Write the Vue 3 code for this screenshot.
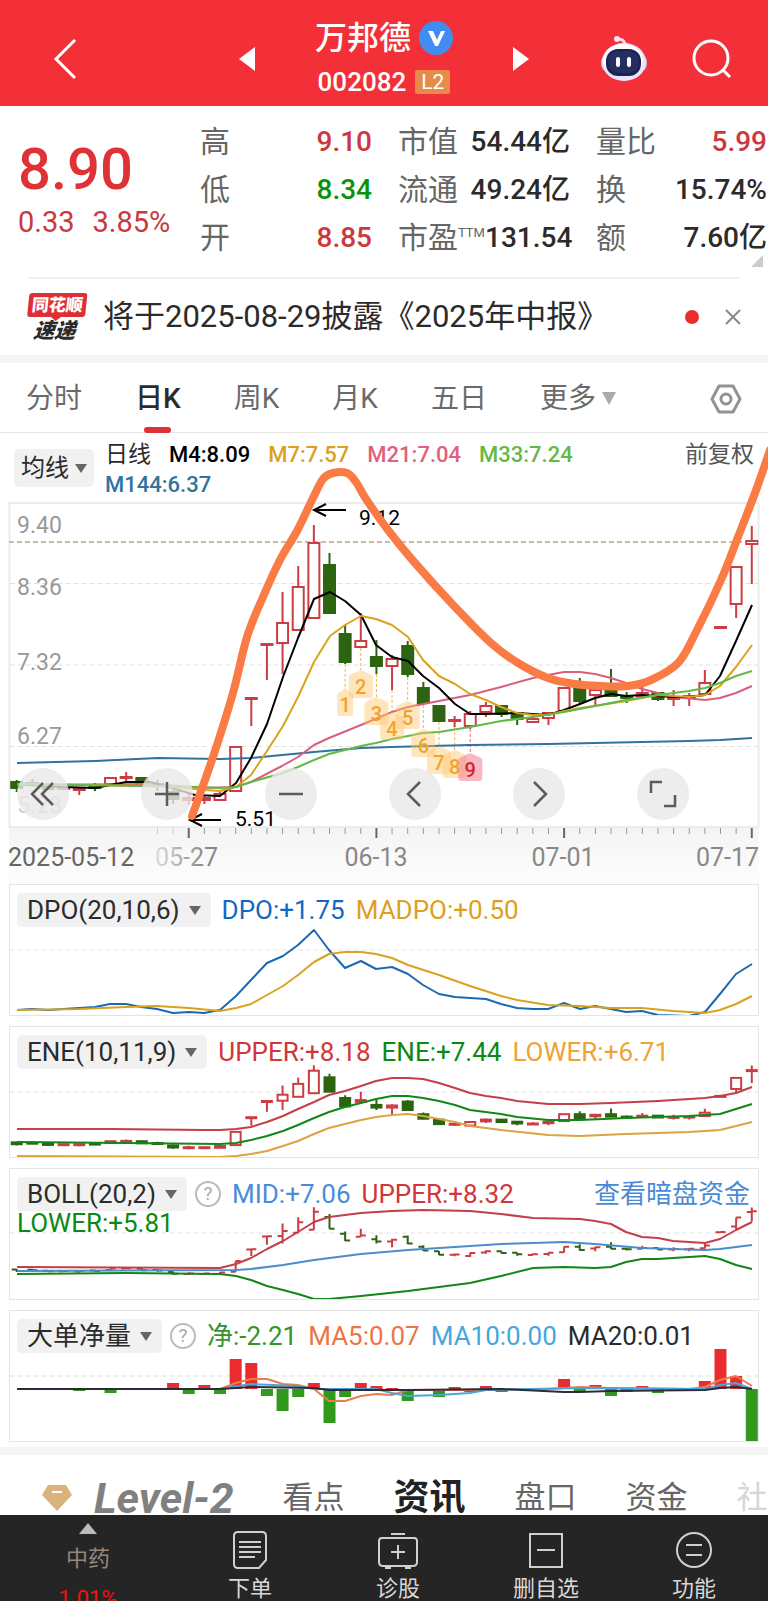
<script setup>
const stats = [
  [
    { label: '高', value: '9.10', tone: 'up' },
    { label: '低', value: '8.34', tone: 'down' },
    { label: '开', value: '8.85', tone: 'up' },
  ],
  [
    { label: '市值', value: '54.44亿', tone: 'plain' },
    { label: '流通', value: '49.24亿', tone: 'plain' },
    { label: '市盈', sup: 'TTM', value: '131.54', tone: 'plain' },
  ],
  [
    { label: '量比', value: '5.99', tone: 'up' },
    { label: '换', value: '15.74%', tone: 'plain' },
    { label: '额', value: '7.60亿', tone: 'plain' },
  ],
]
const periods = ['分时', '日K', '周K', '月K', '五日']
const averages = [
  { text: 'M4:8.09', tone: 'black' },
  { text: 'M7:7.57', tone: 'gold' },
  { text: 'M21:7.04', tone: 'pink' },
  { text: 'M33:7.24', tone: 'lime' },
  { text: 'M144:6.37', tone: 'steel' },
]
const priceLabels = [
  { y: 533, t: '9.40' },
  { y: 595, t: '8.36' },
  { y: 670, t: '7.32' },
  { y: 744, t: '6.27' },
  { y: 813, t: '5.23', faded: true },
]

const cx = (i) => 16.7 + 15.64 * i

// [up, body top, body bottom, wick top, wick bottom]
const candles = [
  [0, 782, 788, 780, 792], [0, 783, 785, 779, 787], [0, 787, 789, 784, 790],
  [1, 788, 789, 787, 790], [1, 788, 790, 787, 795], [0, 786, 788, 783, 791],
  [1, 778, 784, 777, 785], [1, 777, 778, 772, 781], [0, 778, 785, 777, 787],
  [0, 784, 786, 780, 791], [0, 792, 799, 790, 804], [1, 798, 800, 793, 805],
  [1, 798, 800, 796, 804], [1, 794, 800, 792, 801], [1, 747, 791, 747, 791],
  [1, 698, 699, 698, 726], [1, 644, 645, 644, 680], [1, 623, 643, 592, 674],
  [1, 587, 630, 566, 630], [1, 543, 618, 525, 618], [0, 565, 613, 553, 613],
  [0, 634, 662, 625, 664], [1, 641, 647, 613, 647], [0, 657, 666, 640, 674],
  [1, 659, 666, 655, 690], [0, 646, 674, 641, 677], [0, 688, 703, 682, 705],
  [0, 706, 721, 705, 722], [1, 720, 721, 716, 727], [1, 714, 726, 711, 729],
  [1, 706, 712, 702, 717], [0, 706, 714, 706, 717], [0, 713, 719, 713, 725],
  [1, 719, 722, 715, 723], [1, 713, 718, 712, 725], [1, 688, 711, 687, 712],
  [0, 688, 701, 678, 704], [1, 690, 695, 687, 706], [0, 688, 696, 669, 697],
  [0, 696, 698, 692, 703], [1, 693, 696, 684, 697], [0, 693, 699, 692, 701],
  [1, 697, 699, 690, 706], [1, 696, 698, 693, 706], [1, 683, 694, 670, 695],
  [1, 627, 628, 627, 628], [1, 567, 604, 567, 618], [1, 541, 544, 526, 584],
].map(([up, top, bottom, high, low], i) => ({ i, up: !!up, top, bottom, high, low, x: cx(i) }))

const scaled = (base, k) =>
  candles.map((c) => {
    const f = (y) => base + (y - 543) * k
    return { ...c, top: f(c.top), bottom: f(c.bottom), high: f(c.high), low: f(c.low) }
  })
const eneCandles = scaled(1070.7, 0.3)
const bollBars = scaled(1211.7, 0.242)
const barPath = (c) =>
  c.up
    ? `M${c.x} ${c.high}V${c.low}M${c.x - 5} ${c.bottom}H${c.x}M${c.x} ${c.top}H${c.x + 5}`
    : `M${c.x} ${c.high}V${c.low}M${c.x - 5} ${c.top}H${c.x}M${c.x} ${c.bottom}H${c.x + 5}`

const mainLines = [
  { tone: 'steel', p: '17,763 95,761 158,758 220,759 251,758 282,755 314,752 361,748 392,747 470,745 548,744 595,743 642,742 689,741 720,740 752,738' },
  { tone: 'pink', p: '17,785 150,784 204,788 236,787 251,782 282,766 298,757 314,745 329,738 361,725 392,712 408,707 439,701 470,695 501,687 533,678 548,675 564,672 580,672 595,674 611,678 626,683 642,689 658,693 673,697 705,700 720,698 736,693 752,686' },
  { tone: 'black', p: '17,784 63,787 95,788 126,782 150,782 172,788 195,795 220,796 236,783 251,758 267,724 283,677 298,638 314,599 330,592 345,601 361,615 376,645 392,657 408,661 423,676 439,688 455,704 470,714 486,714 517,713 548,715 564,710 580,704 595,698 611,694 626,696 642,695 673,697 689,697 705,695 720,676 736,641 752,605' },
  { tone: 'gold', p: '17,784 160,786 204,790 220,791 236,787 251,775 267,751 283,726 298,697 314,662 330,636 345,625 361,616 376,619 392,625 408,637 423,660 439,676 455,684 470,694 486,700 501,707 517,713 533,715 548,715 564,711 580,708 595,706 626,701 658,695 689,697 705,695 720,686 736,667 752,645' },
  { tone: 'lime', p: '17,784 204,787 220,788 236,787 251,782 283,773 298,767 314,760 329,754 361,746 376,743 392,739 408,736 423,733 439,732 470,727 501,721 533,717 564,712 595,706 626,700 658,695 689,691 705,688 720,683 736,676 752,671' },
]

const sketch = [
  [192, 816], [213, 757], [233, 693], [247, 637], [263, 597], [280, 560], [297, 531], [313, 498],
  [323, 479], [333, 473], [347, 473], [356, 482], [366, 499], [388, 530], [415, 563], [455, 607],
  [491, 643], [518, 663], [548, 678], [575, 684], [601, 686], [628, 686], [651, 680], [678, 663],
  [696, 632], [721, 580], [738, 537], [755, 493], [770, 450],
]
const smooth = (pts) =>
  pts.slice(0, -1).reduce((d, p, i) => {
    const a = pts[i - 1] || p
    const b = pts[i + 1]
    const c = pts[i + 2] || b
    return d + `C${p[0] + (b[0] - a[0]) / 6} ${p[1] + (b[1] - a[1]) / 6} ${b[0] - (c[0] - p[0]) / 6} ${b[1] - (c[1] - p[1]) / 6} ${b[0]} ${b[1]}`
  }, `M${pts[0][0]} ${pts[0][1]}`)
const sketchPath = smooth(sketch)

const tags = [
  { n: 1, i: 21, y: 688, from: 664 },
  { n: 2, i: 22, y: 670, from: 648 },
  { n: 3, i: 23, y: 697, from: 674 },
  { n: 4, i: 24, y: 712, from: 690 },
  { n: 5, i: 25, y: 701, from: 677 },
  { n: 6, i: 26, y: 729, from: 705 },
  { n: 7, i: 27, y: 746, from: 722 },
  { n: 8, i: 28, y: 750, from: 727 },
  { n: 9, i: 29, y: 753, from: 729, hot: true },
].map((t) => ({ ...t, x: cx(t.i), w: t.n === 1 ? 8 : 12 }))
const tagPath = (t) =>
  `M${t.x - t.w} ${t.y + 7}Q${t.x - t.w} ${t.y + 5} ${t.x - t.w + 3} ${t.y + 4}L${t.x} ${t.y}L${t.x + t.w - 3} ${t.y + 4}Q${t.x + t.w} ${t.y + 5} ${t.x + t.w} ${t.y + 7}V${t.y + 25}Q${t.x + t.w} ${t.y + 28} ${t.x + t.w - 3} ${t.y + 28}H${t.x - t.w + 3}Q${t.x - t.w} ${t.y + 28} ${t.x - t.w} ${t.y + 25}Z`

const ticks = Array.from({ length: 39 }, (_, k) => k + 9).map((i) => ({
  x: cx(i),
  major: i === 11 || i === 23 || i === 35 || i === 47,
  faded: i < 11,
}))

const dpoLines = [
  { tone: 'blue', p: '17,1010 32,1009 48,1010 79,1008 95,1007 110,1004 126,1004 141,1007 157,1009 173,1013 189,1012 204,1013 220,1010 236,996 251,980 267,963 283,956 298,945 314,930 329,950 345,968 361,961 376,969 392,967 408,974 423,985 439,994 455,997 470,998 486,999 501,1004 517,1008 533,1009 548,1009 564,1003 580,1009 595,1006 611,1009 626,1012 642,1011 658,1015 689,1016 705,1012 720,994 736,974 752,964' },
  { tone: 'gold', p: '17,1010 79,1009 126,1007 157,1006 189,1008 220,1011 236,1008 251,1004 267,995 283,986 298,975 314,962 329,954 345,952 361,952 376,954 392,958 408,965 439,975 470,986 501,996 517,1000 548,1005 580,1006 611,1008 642,1008 673,1011 705,1013 720,1010 736,1004 752,996' },
]
const eneLines = [
  { tone: 'red', p: '17,1129 110,1129 204,1130 220,1130 236,1129 251,1127 267,1122 283,1116 298,1109 314,1102 329,1095 345,1091 361,1086 376,1081 392,1078 408,1078 423,1079 439,1083 455,1088 470,1093 486,1096 501,1098 517,1101 548,1104 580,1104 611,1103 658,1101 705,1098 720,1096 736,1093 752,1087' },
  { tone: 'green', p: '17,1142 126,1143 220,1144 236,1143 251,1140 267,1136 283,1131 298,1125 314,1118 329,1112 345,1107 361,1103 376,1099 392,1096 408,1096 423,1098 439,1101 455,1105 470,1110 501,1114 517,1117 548,1120 580,1120 626,1118 689,1116 720,1114 736,1109 752,1104' },
  { tone: 'amber', p: '17,1156 220,1157 236,1156 251,1154 267,1151 283,1146 298,1141 314,1134 329,1128 345,1124 361,1120 376,1117 392,1115 408,1114 423,1116 439,1119 455,1122 470,1126 501,1130 548,1135 580,1136 626,1134 689,1132 720,1130 736,1126 752,1122' },
]
const bollLines = [
  { tone: 'red', p: '17,1267 220,1268 236,1264 251,1258 267,1249 283,1241 298,1232 314,1222 329,1217 361,1213 392,1211 423,1210 470,1211 501,1214 533,1218 580,1219 595,1221 611,1224 626,1232 642,1237 658,1238 673,1241 705,1243 720,1239 736,1230 752,1222' },
  { tone: 'sky', p: '17,1271 236,1270 251,1269 283,1265 314,1260 361,1254 408,1250 455,1247 501,1244 533,1243 564,1242 595,1244 642,1248 673,1249 705,1250 720,1249 752,1245' },
  { tone: 'green', p: '17,1274 126,1273 220,1274 236,1276 251,1280 267,1286 283,1290 298,1294 314,1299 329,1299 361,1296 408,1291 439,1287 470,1283 501,1276 533,1268 564,1267 595,1268 611,1267 626,1262 642,1259 658,1259 673,1258 705,1256 720,1259 736,1265 752,1269' },
]
const netLines = [
  { tone: 'orange', p: '17,1388 220,1388 236,1382 251,1378 267,1378 283,1383 298,1384 314,1388 329,1400 345,1400 361,1395 376,1393 392,1394 408,1389 470,1389 548,1388 580,1386 611,1387 689,1388 705,1386 720,1379 736,1375 752,1385' },
  { tone: 'cyan', p: '17,1388 220,1388 251,1383 298,1385 314,1388 376,1388 392,1392 408,1395 439,1394 470,1392 486,1389 580,1387 705,1388 720,1384 736,1382 752,1388' },
  { tone: 'dark', p: '17,1388 220,1388 251,1386 314,1387 329,1389 408,1389 501,1388 564,1391 580,1391 611,1390 705,1389 720,1387 736,1386 752,1388' },
]
const zero = 1388
const netBars = [
  [4, 1390], [6, 1392], [10, 1382], [11, 1393], [12, 1384], [13, 1393], [14, 1358], [15, 1362],
  [16, 1395], [17, 1410], [18, 1396], [19, 1382], [20, 1422], [21, 1396], [22, 1382], [23, 1385],
  [24, 1387], [25, 1400], [26, 1390], [27, 1396], [28, 1386], [29, 1391], [30, 1385], [31, 1391],
  [35, 1378], [36, 1391], [37, 1384], [38, 1395], [39, 1391], [40, 1385], [41, 1392], [44, 1380],
  [45, 1348], [46, 1375], [47, 1441],
].map(([i, y]) => ({ x: cx(i) - 6, y: Math.min(y, zero), h: Math.abs(y - zero), up: y < zero }))

const panels = [
  { name: 'DPO(20,10,6)', box: '10 885 748 130', grid: 950, lines: dpoLines,
    values: [{ t: 'DPO:+1.75', tone: 'blue' }, { t: 'MADPO:+0.50', tone: 'gold' }] },
  { name: 'ENE(10,11,9)', box: '10 1027 748 130', grid: 1092, lines: eneLines, candles: eneCandles,
    values: [{ t: 'UPPER:+8.18', tone: 'red' }, { t: 'ENE:+7.44', tone: 'green' }, { t: 'LOWER:+6.71', tone: 'amber' }] },
  { name: 'BOLL(20,2)', box: '10 1169 748 130', grid: 1233, lines: bollLines, bars: bollBars, help: true, link: '查看暗盘资金',
    values: [{ t: 'MID:+7.06', tone: 'sky' }, { t: 'UPPER:+8.32', tone: 'red' }],
    second: { t: 'LOWER:+5.81', tone: 'green' } },
  { name: '大单净量', box: '10 1310 748 130', grid: 1375, lines: netLines, columns: netBars, help: true,
    values: [{ t: '净:-2.21', tone: 'leaf' }, { t: 'MA5:0.07', tone: 'orange' }, { t: 'MA10:0.00', tone: 'cyan' }, { t: 'MA20:0.01', tone: 'dark' }] },
]
</script>

<template>
  <div class="page">
    <header class="top">
      <button class="bare" aria-label="返回">
        <svg width="26" height="44" viewBox="0 0 26 44"><path d="M23 3L4 22L23 41" fill="none" stroke="#fff" stroke-width="3" /></svg>
      </button>
      <div class="switcher">
        <button class="bare" aria-label="上一只"><svg width="16" height="24" viewBox="0 0 16 24"><path d="M16 0V24L0 12Z" fill="#fff" /></svg></button>
        <div class="title">
          <h1>万邦德
            <svg width="34" height="34" viewBox="0 0 34 34"><circle cx="17" cy="17" r="17" fill="#418cf0" /><path d="M9 10H14L18 19L22 10H26L19 25H16Z" fill="#fff" /></svg>
          </h1>
          <div class="code">002082<span class="l2">L2</span></div>
        </div>
        <button class="bare" aria-label="下一只"><svg width="16" height="24" viewBox="0 0 16 24"><path d="M0 0V24L16 12Z" fill="#fff" /></svg></button>
      </div>
      <div class="tools">
        <button class="bare" aria-label="智能助手">
          <svg width="48" height="46" viewBox="0 0 48 46">
            <path d="M25 8Q24 3 18 3" fill="none" stroke="#f2d5e8" stroke-width="3" stroke-linecap="round" />
            <circle cx="17" cy="3" r="3" fill="#fbe7f2" />
            <rect x="1" y="18" width="46" height="18" rx="8" fill="#c3b9ef" />
            <ellipse cx="24" cy="26" rx="22" ry="19" fill="#e9e3fb" />
            <ellipse cx="23" cy="24" rx="20" ry="16" fill="#fff" />
            <rect x="6" y="13" width="35" height="27" rx="12" fill="#1b2350" />
            <rect x="8" y="15" width="31" height="22" rx="10" fill="#242e61" />
            <rect x="16" y="21" width="4" height="10" rx="2" fill="#fff" /><rect x="27" y="21" width="4" height="10" rx="2" fill="#fff" />
          </svg>
        </button>
        <button class="bare" aria-label="搜索">
          <svg width="40" height="40" viewBox="0 0 40 40" fill="none" stroke="#fff" stroke-width="3"><circle cx="19" cy="19" r="17" /><path d="M31 31L38 38" /></svg>
        </button>
      </div>
    </header>

    <section class="quote">
      <div class="price">
        <strong>8.90</strong>
        <div class="change"><span>0.33</span><span>3.85%</span></div>
      </div>
      <dl v-for="(col, c) in stats" :key="c" class="col">
        <div v-for="s in col" :key="s.label">
          <dt>{{ s.label }}<sup v-if="s.sup">{{ s.sup }}</sup></dt>
          <dd :class="s.tone">{{ s.value }}</dd>
        </div>
      </dl>
      <svg class="corner" width="12" height="12" viewBox="0 0 12 12"><path d="M12 0V12H0Z" fill="#ccc" /></svg>
    </section>

    <section class="notice">
      <div class="express"><b>同花顺</b><svg width="10" height="4" viewBox="0 0 10 4"><path d="M0 0H10L5 4Z" fill="#dd3036" /></svg><i>速递</i></div>
      <p>将于2025-08-29披露《2025年中报》</p>
      <span class="dot"></span>
      <button class="bare" aria-label="关闭"><svg width="16" height="16" viewBox="0 0 16 16"><path d="M1 1L15 15M15 1L1 15" stroke="#888" stroke-width="2" /></svg></button>
    </section>

    <nav class="periods">
      <button v-for="p in periods" :key="p" class="bare" :class="{ on: p === '日K' }">{{ p }}</button>
      <button class="bare more">更多<svg width="14" height="13" viewBox="0 0 14 13"><path d="M0 0H14L7 13Z" fill="#aaa" /></svg></button>
      <button class="bare gear" aria-label="设置">
        <svg width="32" height="32" viewBox="0 0 32 32" fill="none" stroke="#929292" stroke-width="3"><path d="M9 3H23L30 16L23 29H9L2 16Z" stroke-linejoin="round" /><circle cx="16" cy="16" r="5" /></svg>
      </button>
    </nav>

    <section class="chart">
      <div class="legend">
        <button class="pick small">均线<svg width="12" height="9" viewBox="0 0 12 9"><path d="M0 0H12L6 9Z" fill="#666" /></svg></button>
        <div class="averages">
          <span class="kind">日线</span>
          <span v-for="a in averages" :key="a.text" :class="'t-' + a.tone">{{ a.text }}</span>
        </div>
        <a href="#" class="adjust">前复权</a>
      </div>

      <svg class="plot" viewBox="0 433 768 451">
        <defs>
          <linearGradient id="axisFade" x1="0" y1="0" x2="0" y2="1"><stop offset="0" stop-color="#f4f4f4" /><stop offset="1" stop-color="#fdfdfd" /></linearGradient>
          <linearGradient id="dateFade"><stop offset="0" stop-color="#ddd" /><stop offset="0.8" stop-color="#888" /></linearGradient>
        </defs>
        <rect x="9" y="828" width="750" height="56" fill="url(#axisFade)" />
        <rect x="9.5" y="503" width="749" height="324" fill="none" stroke="#ececec" stroke-width="2" />
        <path d="M10 583.5H758M10 665H758M10 746.5H758" stroke="#e2e2e2" stroke-dasharray="5 3" />
        <text v-for="l in priceLabels" :key="l.t" x="17" :y="l.y" class="axis" :class="{ faded: l.faded }">{{ l.t }}</text>
        <path d="M9 542H758" stroke="#b5aa8c" stroke-width="1.5" stroke-dasharray="5 3" />

        <g v-for="t in tags" :key="'d' + t.n">
          <path :d="`M${t.x} ${t.from}V${t.y}`" :stroke="t.hot ? '#e0667a' : '#e8b95e'" stroke-dasharray="3 2" />
        </g>
        <g v-for="c in candles" :key="c.i" :class="c.up ? 'k-up' : 'k-down'">
          <path :d="`M${c.x} ${c.high}V${c.top}M${c.x} ${c.bottom}V${c.low}`" />
          <rect :x="c.x - 5.5" :y="c.top" width="11" :height="c.bottom - c.top" />
        </g>
        <polyline v-for="l in mainLines" :key="l.tone" :points="l.p" :class="'s-' + l.tone" />
        <g v-for="t in tags" :key="t.n" :class="['tag', { hot: t.hot }]">
          <path :d="tagPath(t)" />
          <text :x="t.x" :y="t.y + 24">{{ t.n }}</text>
        </g>

        <g class="mark">
          <path d="M314 510H346M326 504L314 510L326 516" />
          <path d="M190 820H221M202 814L190 820L202 826" />
          <text x="359" y="525">9.12</text>
          <text x="235" y="826">5.51</text>
        </g>
        <path v-for="k in ticks" :key="k.x" :d="`M${k.x} 828V${k.major ? 838 : 834}`" :stroke="k.faded ? '#ccc' : k.major ? '#666' : '#999'" :stroke-width="k.major ? 2 : 1" />
        <text class="date first" x="8" y="866">2025-05-12</text>
        <text class="date fade" x="155" y="866">05-27</text>
        <text class="date mid" x="376" y="866">06-13</text>
        <text class="date mid" x="563" y="866">07-01</text>
        <text class="date end" x="759" y="866">07-17</text>

        <path class="sketch" :d="sketchPath" />
      </svg>

      <div class="controls">
        <button aria-label="最早"><svg viewBox="0 0 30 30"><path d="M15 4L4 15L15 26M25 4L14 15L25 26" /></svg></button>
        <button aria-label="放大"><svg viewBox="0 0 30 30"><path d="M3 15H27M15 3V27" /></svg></button>
        <button aria-label="缩小"><svg viewBox="0 0 30 30"><path d="M3 15H27" /></svg></button>
        <button aria-label="左移"><svg viewBox="0 0 30 30"><path d="M20 3L8 15L20 27" /></svg></button>
        <button aria-label="右移"><svg viewBox="0 0 30 30"><path d="M10 3L22 15L10 27" /></svg></button>
        <button aria-label="全屏"><svg viewBox="0 0 30 30"><path d="M3 14V3H14M16 27H27V16" /></svg></button>
      </div>
    </section>

    <div class="panels">
      <section v-for="p in panels" :key="p.name" class="panel">
        <svg class="plot" :viewBox="p.box" preserveAspectRatio="none">
          <path :d="`M10 ${p.grid}H758`" stroke="#e2e2e2" stroke-dasharray="5 3" />
          <g v-for="c in p.candles || []" :key="c.i" :class="c.up ? 'k-up' : 'k-down'">
            <path :d="`M${c.x} ${c.high}V${c.top}M${c.x} ${c.bottom}V${c.low}`" />
            <rect :x="c.x - 5" :y="c.top" width="10" :height="Math.max(c.bottom - c.top, 1)" />
          </g>
          <g v-for="c in p.bars || []" :key="c.i" :class="c.up ? 'k-up' : 'k-down'"><path :d="barPath(c)" /></g>
          <template v-if="p.columns">
            <rect v-for="b in p.columns" :key="b.x" :x="b.x" :y="b.y" width="12" :height="b.h" :fill="b.up ? '#ea2c2f' : '#2f9a1c'" />
          </template>
          <polyline v-for="l in p.lines" :key="l.tone" :points="l.p" :class="'s-' + l.tone" />
        </svg>
        <div class="info">
          <div class="row">
            <button class="pick">{{ p.name }}<svg width="12" height="9" viewBox="0 0 12 9"><path d="M0 0H12L6 9Z" fill="#666" /></svg></button>
            <button v-if="p.help" class="help" aria-label="说明">?</button>
            <span v-for="v in p.values" :key="v.t" :class="'t-' + v.tone">{{ v.t }}</span>
            <a v-if="p.link" href="#" class="link">{{ p.link }}</a>
          </div>
          <div v-if="p.second" class="second" :class="'t-' + p.second.tone">{{ p.second.t }}</div>
        </div>
      </section>
    </div>

    <nav class="topics">
      <a href="#" class="level">
        <svg width="30" height="26" viewBox="0 0 30 26"><path d="M6 0H24L30 10L15 26L0 10Z" fill="#d9b27c" /><path d="M10 7H20" stroke="#fff" stroke-width="2" /></svg>
        <span>Level-2</span>
      </a>
      <a href="#">看点</a>
      <a href="#" class="on">资讯</a>
      <a href="#">盘口</a>
      <a href="#">资金</a>
      <a href="#" class="cut">社</a>
    </nav>

    <footer class="dock">
      <a href="#" class="sector">
        <svg width="18" height="11" viewBox="0 0 18 11"><path d="M9 0L18 11H0Z" fill="#bbb" /></svg>
        <span>中药</span>
        <em>1.01%</em>
      </a>
      <button class="bare">
        <svg width="36" height="40" viewBox="0 0 36 40"><path d="M6 2H30Q34 2 34 6V30L27 38H6Q2 38 2 34V6Q2 2 6 2ZM7 12H29M7 17H29M7 22H29M7 27H23" /></svg>
        下单
      </button>
      <button class="bare">
        <svg width="42" height="40" viewBox="0 0 42 40"><path d="M5 8H37Q40 8 40 11V32Q40 36 36 36H6Q2 36 2 32V11Q2 8 5 8ZM14 4H28M21 15V29M14 22H28M8 38H14M28 38H34" /></svg>
        诊股
      </button>
      <button class="bare">
        <svg width="36" height="40" viewBox="0 0 36 40"><path d="M2 4H34V37H2ZM9 20H27" /></svg>
        删自选
      </button>
      <button class="bare">
        <svg width="38" height="40" viewBox="0 0 38 40"><circle cx="19" cy="20" r="17" /><path d="M11 15H27M11 25H27" /></svg>
        功能
      </button>
    </footer>
  </div>
</template>

<style>
body { margin: 0; background: #fff; }
</style>

<style scoped>
.page { font-family: Roboto, "Noto Sans CJK SC", sans-serif; color: #2b2b2b; background: #fff; overflow: hidden; }
.page * { box-sizing: border-box; }
button { font: inherit; color: inherit; cursor: pointer; }
.bare { border: 0; background: none; padding: 0; margin: 0; }
a { color: inherit; text-decoration: none; }
svg { display: block; flex: none; }

.top { display: grid; grid-template-columns: 1fr 290px 1fr; align-items: center; height: 106px; padding: 12px 36px 0 52px; background: #f33038; color: #fff; }
.top > .bare { justify-self: start; }
.switcher { display: flex; justify-content: space-between; align-items: center; margin: 0 8px 0 -8px; }
.title { display: flex; flex-direction: column; align-items: center; gap: 6px; }
h1 { display: flex; align-items: center; gap: 8px; margin: 0; font-size: 32px; line-height: 40px; font-weight: 500; }
.code { display: flex; align-items: center; gap: 9px; font-size: 26px; line-height: 36px; font-weight: 500; }
.l2 { background: #e68c48; font-size: 21px; line-height: 24px; padding: 0 6px; border-radius: 2px; font-weight: 400; }
.tools { display: flex; justify-content: flex-end; align-items: center; gap: 44px; }

.quote { position: relative; display: grid; grid-template-columns: 156px 172px 172px 1fr; column-gap: 26px; height: 171px; padding: 12px 1px 0 18px; }
.price { color: #df3236; padding-top: 18px; }
.price strong { display: block; font-size: 58px; line-height: 66px; font-weight: 500; }
.change { display: flex; gap: 18px; font-size: 29px; line-height: 40px; white-space: nowrap; color: #cc383d; }
.col { margin: 0; }
.col > div { display: flex; justify-content: space-between; align-items: center; height: 48px; white-space: nowrap; }
dt { font-size: 30px; line-height: 48px; color: #666; }
dt sup { font-size: 13px; line-height: 16px; vertical-align: 11px; }
dd { margin: 0; font-size: 28px; line-height: 48px; font-weight: 500; }
.up { color: #cc383d; }
.down { color: #089408; }
.plain { color: #2b2b2b; }
.corner { position: absolute; right: 5px; bottom: 10px; }

.notice { display: flex; align-items: center; height: 78px; margin: 0 27px; border-top: 2px solid #f2f2f2; }
.express { width: 58px; display: flex; flex-direction: column; align-items: center; transform: skewX(-6deg); }
.express b { width: 100%; background: #dd3036; color: #fff; font-size: 17px; line-height: 24px; text-align: center; border-radius: 3px; font-weight: 900; }
.express i { font-size: 21px; line-height: 20px; font-weight: 900; }
.notice p { margin: 0 0 0 18px; font-size: 31px; line-height: 40px; flex: 1; white-space: nowrap; }
.dot { width: 14px; height: 14px; border-radius: 50%; background: #e92d2d; margin-right: 26px; }

.periods { display: flex; align-items: center; gap: 53px; height: 78px; border-top: 8px solid #f4f4f4; border-bottom: 1px solid #e6e6e6; padding: 2px 26px 0; font-size: 28px; color: #6a6a6a; }
.periods button { position: relative; line-height: 40px; white-space: nowrap; }
.periods .on { color: #2b2b2b; font-weight: 500; }
.periods .on::after { content: ""; position: absolute; left: 9px; bottom: -14px; width: 27px; height: 6px; border-radius: 3px; background: #de3236; }
.more { display: flex; align-items: center; gap: 6px; }
.gear { margin-left: auto; }

.chart { display: grid; }
.chart > * { grid-area: 1 / 1; }
.plot { width: 100%; pointer-events: none; }
.legend { display: flex; align-items: flex-start; align-self: start; padding: 7px 14px; font-size: 22px; line-height: 30px; }
.averages { display: flex; flex-wrap: wrap; column-gap: 18px; flex: 1; margin-left: 11px; padding-right: 100px; white-space: nowrap; font-weight: 500; }
.averages .kind { font-weight: 400; font-size: 23px; }
.adjust { color: #555; margin-left: -70px; font-size: 23px; }
.pick { display: flex; align-items: center; gap: 9px; height: 34px; border: 0; border-radius: 5px; background: #f1f1f1; padding: 0 10px; font-size: 26px; line-height: 34px; white-space: nowrap; color: #2b2b2b; }
.pick.small { font-size: 24px; height: 38px; gap: 6px; padding: 0 7px; margin-top: 9px; }
.axis { font-size: 23px; fill: #999; }
.axis.faded { fill: #ccc; }
.date { font-size: 25px; fill: #888; }
.date.fade { fill: url(#dateFade); }
.date.first { fill: #666; }
.date.mid { text-anchor: middle; }
.date.end { text-anchor: end; }
.mark path { fill: none; stroke: #000; stroke-width: 2; }
.mark text { font-size: 21px; fill: #000; }
.sketch { fill: none; stroke: #fb7b44; stroke-width: 8; stroke-linecap: round; stroke-linejoin: round; }
.tag path { fill: #ffc66b; fill-opacity: 0.45; }
.tag text { font-size: 20px; font-weight: 500; text-anchor: middle; fill: #f2a32a; }
.tag.hot path { fill: #f2808c; fill-opacity: 0.55; }
.tag.hot text { fill: #d8232f; }
.k-up { fill: #fff; stroke: #cb3d43; stroke-width: 2; }
.k-down { fill: #2c6412; stroke: #2c6412; stroke-width: 2; }
.k-up path, .k-down path { fill: none; }
polyline { fill: none; stroke-width: 2; stroke-linejoin: round; }

.controls { display: flex; gap: 72px; align-self: end; padding: 0 0 64px 17px; }
.controls button { width: 52px; height: 52px; border: 0; border-radius: 50%; background: rgba(232, 232, 232, 0.8); padding: 11px; }
.controls svg { width: 30px; height: 30px; fill: none; stroke: #5c5c5c; stroke-width: 2.5; }

.panels { display: grid; gap: 10px; padding: 0 9px 5px; }
.panel { display: grid; border: 1px solid #e4e4e4; }
.panel > * { grid-area: 1 / 1; }
.panel .plot { height: 130px; }
.info { padding: 8px 8px 0 7px; font-size: 26px; line-height: 34px; min-width: 0; }
.row { display: flex; align-items: center; gap: 11px; white-space: nowrap; }
.help { width: 26px; height: 26px; margin: 0 0 0 -3px; border: 2px solid #bbb; border-radius: 50%; background: #fff; color: #aaa; font-size: 19px; line-height: 22px; padding: 0; }
.second { line-height: 24px; }
.link { margin-left: auto; color: #4a8ad4; }

.t-black { color: #000; } .t-gold { color: #dda01e; } .t-pink { color: #e0607e; } .t-lime { color: #64b944; }
.t-steel { color: #31729f; } .t-blue { color: #1168c4; } .t-red { color: #d1363b; } .t-green { color: #0a8a10; }
.t-amber { color: #eea336; } .t-sky { color: #4b8cd8; } .t-leaf { color: #35932a; } .t-orange { color: #ec7545; }
.t-cyan { color: #44a7e0; } .t-dark { color: #2b2b2b; }
.s-black { stroke: #000; } .s-gold { stroke: #d9a21f; } .s-pink { stroke: #d95f7d; } .s-lime { stroke: #64b944; }
.s-steel { stroke: #31729f; } .s-blue { stroke: #1d68b4; } .s-red { stroke: #c33f49; } .s-green { stroke: #128718; }
.s-amber { stroke: #dda243; } .s-sky { stroke: #4b8ccc; } .s-orange { stroke: #ec7c4d; } .s-cyan { stroke: #4ba5d8; } .s-dark { stroke: #2b2b3b; }

.topics { display: flex; align-items: center; height: 68px; border-top: 8px solid #f4f4f4; padding: 26px 0 0 42px; font-size: 31px; line-height: 34px; color: #666; white-space: nowrap; gap: 49px; }
.level { display: flex; align-items: center; gap: 22px; font-size: 43px; font-style: italic; font-weight: 700; color: #808080; }
.topics .on { color: #222; font-size: 36px; font-weight: 700; }
.topics .cut { color: #d6d6d6; }

.dock { position: relative; display: grid; grid-template-columns: 176fr repeat(4, 148fr); height: 86px; overflow: hidden; background: #252525; color: #d8d8d8; font-size: 22px; line-height: 30px; }
.dock > * { display: flex; flex-direction: column; align-items: center; justify-content: flex-start; padding-top: 15px; gap: 4px; }
.dock button svg { fill: none; stroke: #d0d0d0; stroke-width: 2; }
.dock .sector { padding-top: 8px; gap: 10px; color: #98887a; }
.sector em { font-style: normal; color: #f0140f; }
</style>
